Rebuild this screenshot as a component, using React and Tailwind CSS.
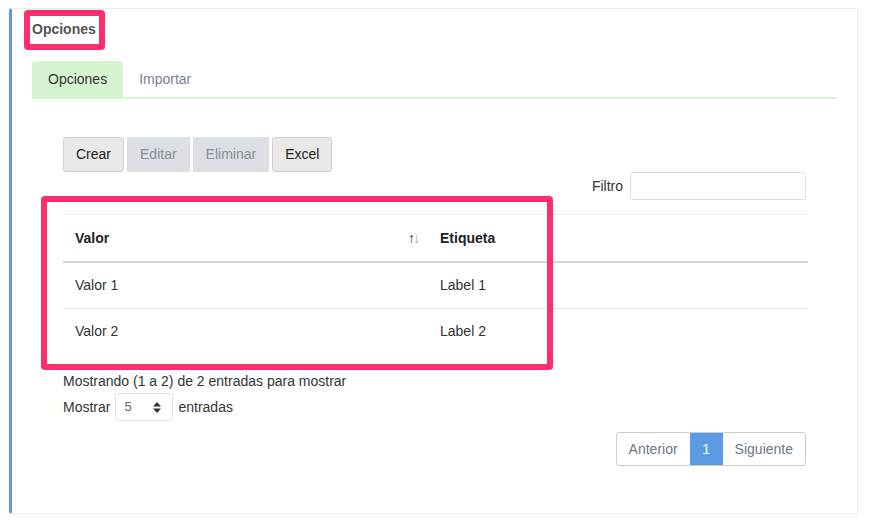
import { useState } from "react";

const rows = [
  { valor: "Valor 1", label: "Label 1" },
  { valor: "Valor 2", label: "Label 2" },
];

function App() {
  const [tab, setTab] = useState("opciones");

  return (
    <div className="min-h-[521px] bg-white pt-[8px] pl-[9px] font-['Liberation_Sans',Arial,sans-serif] text-[14px] text-[#333]">
      <div className="w-[849px] h-[506px] border border-[#ececec] border-l-[3px] border-l-[#5b9be6] rounded-[3px] pt-[10px] pl-[20px] pr-[20px]">
        {/* Title */}
        <div className="relative inline-block">
          <h3 className="text-[14px] leading-[20px] font-bold text-[#555]">Opciones</h3>
          <div className="absolute left-[-8px] top-[-9px] w-[81px] h-[40px] border-[6px] border-[#ff2d6b] rounded-[4px]"></div>
        </div>

        {/* Tabs */}
        <div className="mt-[21px] flex border-b-2 border-[#d4f5d0]">
          <button
            onClick={() => setTab("opciones")}
            className={`h-[36px] px-[16px] rounded-t-[4px] ${tab === "opciones" ? "bg-[#d4f5d0] text-[#333]" : "text-[#7a8290]"}`}
          >
            Opciones
          </button>
          <button
            onClick={() => setTab("importar")}
            className={`h-[36px] px-[16px] rounded-t-[4px] ${tab === "importar" ? "bg-[#d4f5d0] text-[#333]" : "text-[#7a8290]"}`}
          >
            Importar
          </button>
        </div>

        <div className="pl-[31px] pr-[29px]">
          {/* Toolbar */}
          <div className="mt-[38px] flex gap-[3px]">
            <button className="h-[35px] px-[12px] bg-[#e9e9e9] border border-[#d0d0d0] rounded-[3px] text-[#222]">Crear</button>
            <button className="h-[35px] px-[13px] bg-[#dcdfe3] text-[#8a9098]">Editar</button>
            <button className="h-[35px] px-[13px] bg-[#dcdfe3] text-[#8a9098]">Eliminar</button>
            <button className="h-[35px] px-[12px] bg-[#e9e9e9] border border-[#d0d0d0] rounded-[3px] text-[#222]">Excel</button>
          </div>

          {/* Filter */}
          <div className="flex justify-end items-center gap-[7px] pr-[2px]">
            <label className="text-[#333]">Filtro</label>
            <input className="w-[176px] h-[28px] border border-[#dedede] rounded-[3px] outline-none px-2" />
          </div>

          {/* Table */}
          <div className="relative mt-[14px]">
            <table className="w-full border-collapse">
              <thead>
                <tr className="border-t border-[#e8e8e8] border-b-2 border-b-[#d0d3d8]">
                  <th className="w-[365px] py-[13px] leading-[20px] px-[12px] text-left font-bold text-[#222]">
                    <div className="flex items-center justify-between">
                      <span>Valor</span>
                      <span className="text-[14px] tracking-[-2px] mr-[-2px] font-normal">
                        <span className="text-[#333]">↑</span>
                        <span className="text-[#aaa]">↓</span>
                      </span>
                    </div>
                  </th>
                  <th className="py-[13px] leading-[20px] px-[12px] text-left font-bold text-[#222]">Etiqueta</th>
                </tr>
              </thead>
              <tbody>
                {rows.map((r, i) => (
                  <tr key={r.valor} className={i === 0 ? "border-b border-[#e8e8e8]" : ""}>
                    <td className="py-[12px] leading-[21px] px-[12px]">{r.valor}</td>
                    <td className="py-[12px] leading-[21px] px-[12px]">{r.label}</td>
                  </tr>
                ))}
              </tbody>
            </table>
            <div className="absolute left-[-22px] top-[-18px] w-[512px] h-[174px] border-[6px] border-[#ff2d6b] rounded-[4px]"></div>
          </div>

          {/* Info */}
          <div className="mt-[17px] leading-[20px]">Mostrando (1 a 2) de 2 entradas para mostrar</div>
          <div className="mt-[2px] flex items-center gap-[5px]">
            <span>Mostrar</span>
            <div className="w-[58px] h-[28px] border border-[#e0e0e0] rounded-[3px] flex items-center justify-between pl-[8px] pr-[11px]">
              <span className="text-[13px] text-[#666]">5</span>
              <svg width="8" height="11" viewBox="0 0 8 11">
                <path d="M4 0 L8 4.5 L0 4.5 Z" fill="#333" />
                <path d="M0 6.5 L8 6.5 L4 11 Z" fill="#333" />
              </svg>
            </div>
            <span>entradas</span>
          </div>

          {/* Pagination */}
          <div className="mt-[11px] flex justify-end pr-[2px]">
            <div className="flex h-[34px] border border-[#ccc] rounded-[3px] overflow-hidden text-[#6c7684]">
              <button className="px-[12px]">Anterior</button>
              <button className="w-[33px] bg-[#5b9be6] text-white">1</button>
              <button className="px-[12px]">Siguiente</button>
            </div>
          </div>
        </div>
      </div>
    </div>
  );
}

export default App;
